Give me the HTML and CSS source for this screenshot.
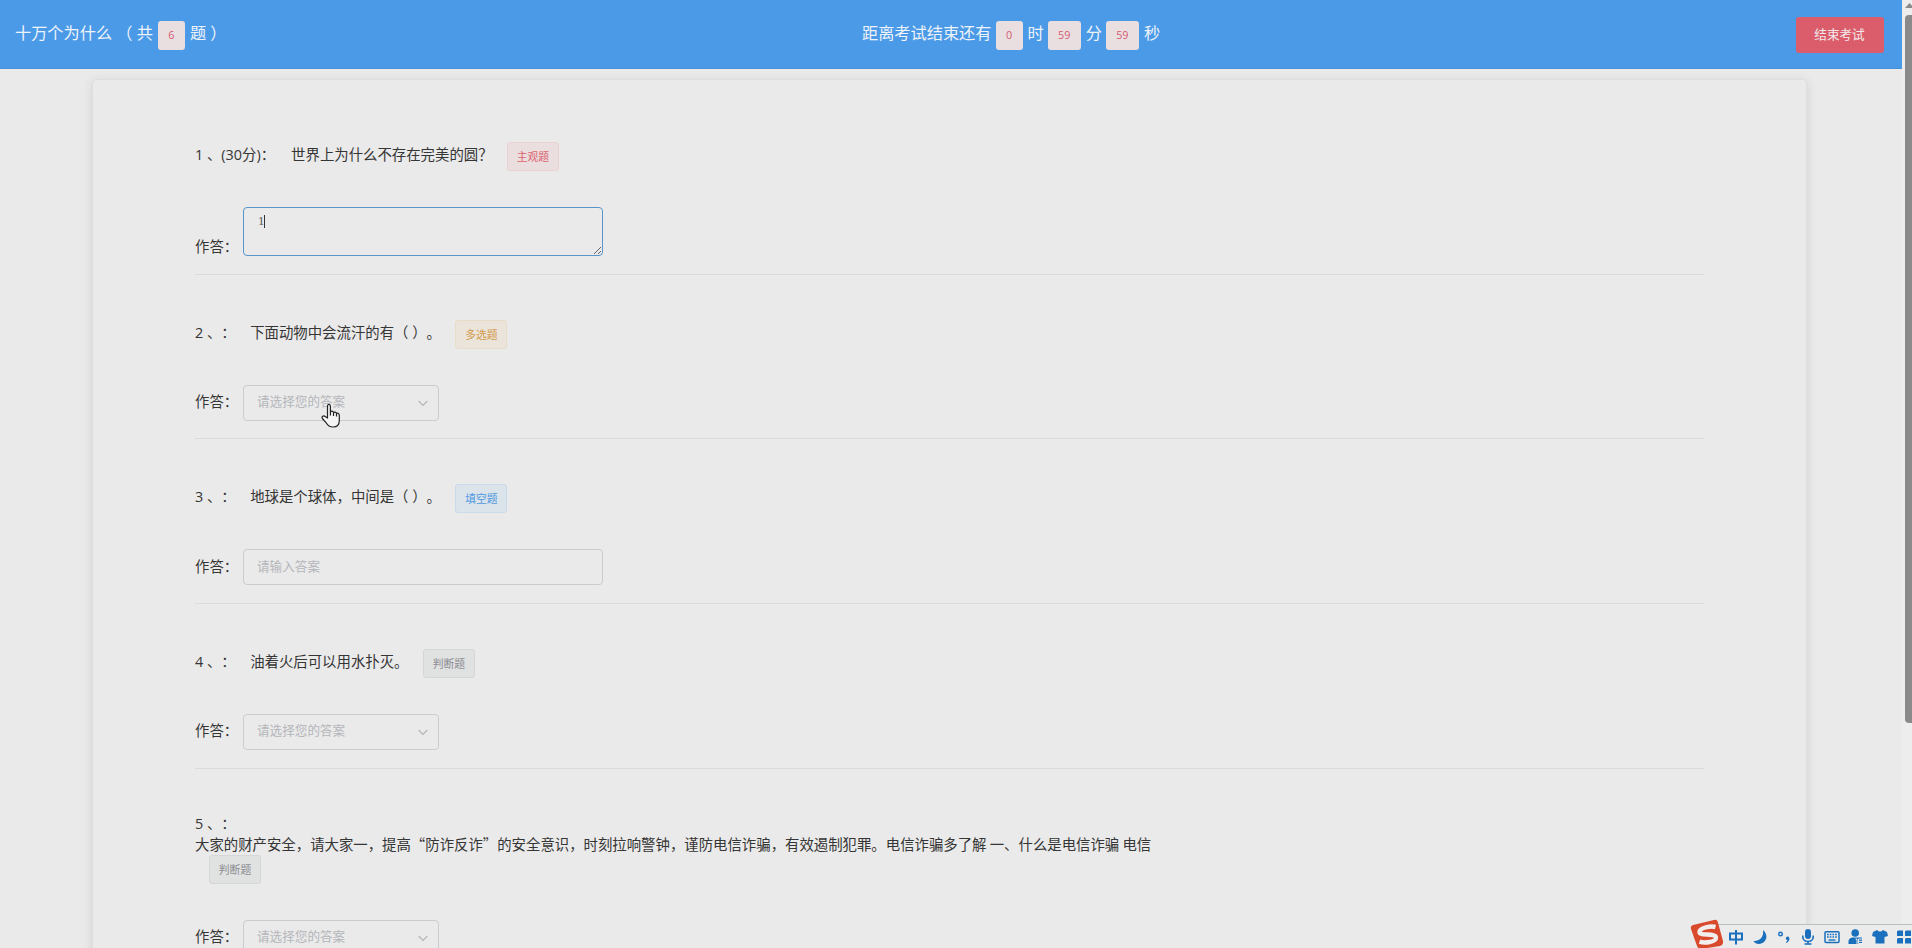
FILE: index.html
```html
<!DOCTYPE html>
<html lang="zh-CN">
<head>
    <meta charset="UTF-8">
    <meta name="viewport" content="width=device-width, initial-scale=1.0">
    <title>十万个为什么</title>
    <link rel="stylesheet" href="styles.css">
</head>
<body>
    <div class="page">
        <header class="header">
            <div class="exam-name">十万个为什么 <span class="count">（ 共</span><span class="num one">6</span>题 ）</div>
            <div class="countdown">距离考试结束还有<span class="num one">0</span>时<span class="num">59</span>分<span class="num">59</span>秒</div>
            <button class="finish">结束考试</button>
        </header>
        <main class="card">
            <section class="question first">
                <div class="title"><span>1 、(30分)：</span><span class="text">世界上为什么不存在完美的圆？</span><span class="tag danger">主观题</span></div>
                <div class="answer">
                    <label>作答：</label>
                    <div class="textarea">1<i class="caret"></i>
                        <svg class="grip" width="9" height="9" viewBox="0 0 9 9"><path d="M1 8L8 1M5 8L8 5" stroke="#666" fill="none"/></svg>
                    </div>
                </div>
            </section>
            <section class="question">
                <div class="title"><span>2 、：</span><span class="text">下面动物中会流汗的有（ ）。</span><span class="tag warning">多选题</span></div>
                <div class="answer">
                    <label>作答：</label>
                    <div class="input select">请选择您的答案<svg width="10" height="7" viewBox="0 0 10 7"><path d="M.7 1L5 5.4L9.3 1"/></svg></div>
                </div>
            </section>
            <section class="question">
                <div class="title"><span>3 、：</span><span class="text">地球是个球体，中间是（ ）。</span><span class="tag primary">填空题</span></div>
                <div class="answer">
                    <label>作答：</label>
                    <div class="input">请输入答案</div>
                </div>
            </section>
            <section class="question">
                <div class="title"><span>4 、：</span><span class="text">油着火后可以用水扑灭。</span><span class="tag info">判断题</span></div>
                <div class="answer">
                    <label>作答：</label>
                    <div class="input select">请选择您的答案<svg width="10" height="7" viewBox="0 0 10 7"><path d="M.7 1L5 5.4L9.3 1"/></svg></div>
                </div>
            </section>
            <section class="question long">
                <div class="title"><span>5 、：</span></div>
                <p class="content">大家的财产安全，请大家一，提高“防诈反诈”的安全意识，时刻拉响警钟，谨防电信诈骗，有效遏制犯罪。电信诈骗多了解 一、什么是电信诈骗 电信</p>
                <span class="tag info">判断题</span>
                <div class="answer">
                    <label>作答：</label>
                    <div class="input select">请选择您的答案<svg width="10" height="7" viewBox="0 0 10 7"><path d="M.7 1L5 5.4L9.3 1"/></svg></div>
                </div>
            </section>
        </main>
    </div>
    <div class="scrollbar">
        <svg width="7" height="5" viewBox="0 0 7 5"><path d="M0 5L4.5 0L7 2.7V5Z" fill="#8a8a8a"/></svg>
        <div class="thumb"></div>
    </div>

    <svg class="cursor" width="20" height="26" viewBox="0 0 20 26"><path d="M6.5 15V3.4C6.5.8 9.4.8 9.4 3.4V9.2C10.2 7.6 12.2 8 12.5 9.7C13.5 8.5 15.2 9 15.5 10.6C16.7 9.7 18.3 10.5 18.3 12.2V17.5C18.3 21.6 15.8 24 12 24C8.3 24 6.6 22.3 5.2 19.8L1.4 15.5C.2 13.5 2.6 12.2 4.2 13.5ZM9.4 9V12.6M12.5 9.8V13M15.5 10.7V13.5" fill="#f4f4f4" stroke="#222" stroke-width="1.2" stroke-linejoin="round"/></svg>

    <!-- input method bar -->
    <svg class="sogou" width="34" height="30" viewBox="0 0 34 30">
        <path d="M3 6L24 1Q27 0 27.8 3L33 22Q33.5 26 30 27L11 30Q8 30 7 27L1 10Q0 7 3 6Z" fill="#d9492c"/>
        <path d="M25.5 8C21 6.8 9.5 8.5 9.5 13C9.5 17.5 25.5 13.5 26 18.5C26.3 23.3 14.5 24.3 9.5 22.7" fill="none" stroke="#f3eeee" stroke-width="4.4"/>
    </svg>
    <div class="ime">
        <svg width="16" height="16" viewBox="0 0 16 16"><path d="M2 4.5H14V10.5H2ZM8 1V15.5" fill="none" stroke="#1b70bd" stroke-width="2"/></svg>
        <svg width="16" height="16" viewBox="0 0 16 16"><path d="M11 1C18 7 13 15 7 15C4.5 15 2.5 14 1.5 12C8 12.5 12 8 11 1Z"/></svg>
        <svg width="16" height="16" viewBox="0 0 16 16"><circle cx="4.5" cy="5" r="1.8" fill="none" stroke="#1b70bd" stroke-width="1.4"/><path d="M10 8.5Q12 6.5 13.4 9Q13.8 12 10.5 14L10 13Q11.5 12 11.4 11Q9.3 10.7 10 8.5Z"/></svg>
        <svg width="16" height="16" viewBox="0 0 16 16"><rect x="5" y="0" width="6" height="10" rx="3"/><path d="M2.8 6.5V8C2.8 14 13.2 14 13.2 8V6.5M8 12V15M4.5 15H11.5" fill="none" stroke="#1b70bd" stroke-width="1.6"/></svg>
        <svg width="16" height="16" viewBox="0 0 16 16"><rect x="1" y="2.7" width="14" height="10.8" rx="1" fill="none" stroke="#1b70bd" stroke-width="1.5"/><path d="M3 5.5H13M3 8H13" stroke="#1b70bd" stroke-width="1.6" stroke-dasharray="1.7 1"/><path d="M4.5 11H11.5" stroke="#1b70bd" stroke-width="1.4"/></svg>
        <svg width="16" height="16" viewBox="0 0 16 16"><circle cx="7.2" cy="4" r="3.8"/><path d="M.5 15V12Q1 8.5 5 8.5H14V15Z"/><path d="M7.5 10H9V15M10.5 10H15V14.5H10.5ZM10.5 12.3H15" fill="none" stroke="#ebebeb" stroke-width="1"/></svg>
        <svg width="16" height="16" viewBox="0 0 16 16"><path d="M1 3L5 1Q8 4 11 1L15 3L16 7L12.5 8V14.5H3.5V8L0 7Z"/></svg>
        <svg width="16" height="16" viewBox="0 0 16 16"><path d="M2 1.5H7V7H1V2.5ZM10 1.5H15V7H9V2.5ZM2 9H7V14.5H1V10ZM10 9H15V14.5H9V10Z"/></svg>
    </div>
</body>
</html>
```
FILE: styles.css
```css
* {
    box-sizing: border-box;
}

body {
    margin: 0;
    display: flex;
    height: 948px;
    overflow: hidden;
    background-color: #eaeaea;
    color: #353535;
    font-family: "Open Sans", "Noto Sans CJK SC", sans-serif;
    font-size: 14.4px;
    line-height: 20px;
    text-spacing-trim: space-all;
}

.page {
    width: 1902px;
    height: 948px;
    overflow: hidden;
}

.header {
    display: grid;
    grid-template-columns: 862px 1fr auto;
    align-items: center;
    height: 69px;
    padding: 0 18px 0 0;
    background-color: #4b9ae8;
    border-bottom: 1px solid #4791da;
    color: #eef3f8;
    font-size: 16.2px;
}

.exam-name,
.countdown {
    display: flex;
    align-items: center;
    margin-top: -2px;
    white-space: pre;
}

.exam-name {
    padding-left: 15px;
}

.count {
    padding-right: 1px;
}

.num {
    width: 33px;
    height: 29px;
    margin: 4px 5px 0 4px;
    border-radius: 3px;
    background-color: #eadfe0;
    color: #d65a70;
    font-size: 10.8px;
    line-height: 28px;
    text-align: center;
}

.num.one {
    width: 27px;
}

.finish {
    width: 88px;
    height: 36px;
    margin-top: 1px;
    padding: 0 1px 2px 0;
    border: 0;
    border-radius: 3px;
    background-color: #db5d6b;
    color: #f3e9ea;
    font-family: inherit;
    font-size: 12.6px;
}

.card {
    width: 1715px;
    height: 1200px;
    margin: 10px 0 0 92px;
    padding: 0 102px;
    border: 1px solid #dedede;
    border-radius: 4px;
    box-shadow: 0 2px 11px rgba(0, 0, 0, 0.1);
}

.question {
    height: 164.7px;
    padding-top: 45px;
    border-bottom: 1px solid #dadada;
}

.question.first {
    height: 194.6px;
    padding-top: 62px;
}

.title {
    display: flex;
    align-items: center;
    height: 29px;
    white-space: pre;
}

.title > span:first-child,
.text {
    margin-bottom: 3px;
}

.text {
    margin-left: 14.4px;
    margin-right: 14.4px;
}

.first .text {
    margin-left: 16px;
}

.tag {
    display: block;
    width: 52px;
    height: 29px;
    border: 1px solid;
    border-radius: 3px;
    font-size: 10.8px;
    line-height: 27px;
    text-align: center;
}

.danger {
    background-color: #ebdede;
    border-color: #ead1d3;
    color: #dc6370;
}

.warning {
    background-color: #ebe4da;
    border-color: #e9dcc9;
    color: #d29a4c;
}

.primary {
    background-color: #dbe3eb;
    border-color: #c9daea;
    color: #4f99e0;
}

.info {
    background-color: #e0e1e1;
    border-color: #d5d6d7;
    color: #8b8d91;
}

.answer {
    display: flex;
    align-items: center;
    margin-top: 36px;
}

.answer label {
    width: 48px;
    padding-bottom: 1px;
}

.input {
    display: flex;
    align-items: center;
    width: 360px;
    height: 36px;
    padding: 0 13px 1px;
    border: 1px solid #cbcccd;
    border-radius: 4px;
    color: #b4b6ba;
    font-size: 12.6px;
}

.select {
    justify-content: space-between;
    width: 196px;
    padding-right: 10px;
}

.select svg {
    margin-top: 2px;
    fill: none;
    stroke: #b4b6ba;
    stroke-width: 1.2;
}

.first .answer {
    align-items: flex-end;
}

.first label {
    padding: 0;
    line-height: 18px;
}

.textarea {
    position: relative;
    display: flex;
    width: 360px;
    height: 49px;
    padding: 3px 14px;
    border: 1px solid #5795cb;
    border-radius: 4px;
    color: #555;
    font-family: "Liberation Serif", serif;
    font-size: 12.6px;
}

.caret {
    width: 1px;
    height: 13px;
    margin-top: 4px;
    background-color: #333;
}

.grip {
    position: absolute;
    right: 0;
    bottom: 0;
}

.question.long {
    height: 220px;
}

.long .title {
    height: 20px;
}

.long .title > span:first-child {
    margin-bottom: 0;
}

.content {
    margin: 0;
    font-family: "Noto Sans CJK SC", sans-serif;
    white-space: nowrap;
}

.long .tag {
    margin: 1px 0 0 14px;
}

.scrollbar {
    width: 10px;
    padding: 3px 0 0 3px;
    background-color: #ededed;
}

.scrollbar svg {
    display: block;
}

.thumb {
    height: 708px;
    margin-top: 7px;
    border-radius: 4px 0 0 4px;
    background-color: #8a8a8a;
}

.cursor {
    position: absolute;
    left: 321px;
    top: 403px;
}

.sogou {
    position: absolute;
    left: 1690px;
    top: 919px;
    z-index: 1;
}

.ime {
    position: absolute;
    left: 1708px;
    top: 924px;
    display: flex;
    gap: 8px;
    width: 204px;
    height: 24px;
    padding: 4px 0 0 20px;
    border-top: 1px solid #b9c1c1;
    background-color: #ebebeb;
    overflow: hidden;
}

.ime svg {
    flex: none;
    fill: #1b70bd;
}
```
